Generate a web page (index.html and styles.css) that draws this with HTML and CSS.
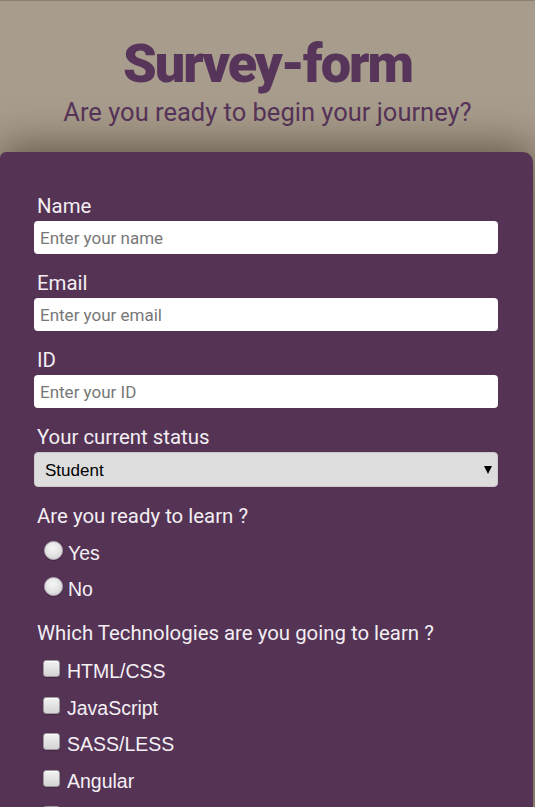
FILE: index.html
```html
<!DOCTYPE html>
<html lang="en">
<head>
<meta charset="utf-8">
<title>Survey-form</title>
<link rel="stylesheet" href="styles.css">
</head>
<body>
<header class="hero">
  <h1 class="title">Survey-form</h1>
  <p class="subtitle">Are you ready to begin your journey?</p>
</header>
<main class="card">
  <form class="form">
    <div class="field">
      <label class="label" for="name">Name</label>
      <input class="text-input" id="name" type="text" placeholder="Enter your name">
    </div>
    <div class="field">
      <label class="label" for="email">Email</label>
      <input class="text-input" id="email" type="email" placeholder="Enter your email">
    </div>
    <div class="field">
      <label class="label" for="id">ID</label>
      <input class="text-input" id="id" type="text" placeholder="Enter your ID">
    </div>
    <div class="field">
      <label class="label" for="status">Your current status</label>
      <div class="select-wrap">
        <select class="select" id="status">
          <option>Student</option>
          <option>Full-time job</option>
          <option>Other</option>
        </select>
      </div>
    </div>
    <div class="field">
      <p class="label">Are you ready to learn ?</p>
      <label class="option"><input class="radio" type="radio" name="ready"><span>Yes</span></label>
      <label class="option"><input class="radio" type="radio" name="ready"><span>No</span></label>
    </div>
    <div class="field">
      <p class="label">Which Technologies are you going to learn ?</p>
      <label class="option check-row"><input class="check" type="checkbox"><span>HTML/CSS</span></label>
      <label class="option check-row"><input class="check" type="checkbox"><span>JavaScript</span></label>
      <label class="option check-row"><input class="check" type="checkbox"><span>SASS/LESS</span></label>
      <label class="option check-row"><input class="check" type="checkbox"><span>Angular</span></label>
      <label class="option check-row"><input class="check" type="checkbox"><span>React</span></label>
      <label class="option check-row"><input class="check" type="checkbox"><span>Vue</span></label>
    </div>
  </form>
</main>
</body>
</html>
```
FILE: styles.css
```css
* { box-sizing: border-box; }
html, body { margin: 0; padding: 0; }
body {
  background: #a89c8c;
  border-top: 1px solid #8a8178;
  font-family: Roboto, "Noto Sans", sans-serif;
  overflow: hidden;
}
.hero {
  text-align: center;
  color: #57345a;
  padding-top: 33px;
  height: 151px;
}
.title {
  margin: 0;
  font-family: Roboto, sans-serif;
  font-weight: 900;
  font-size: 54px;
  line-height: 60px;
  letter-spacing: -2px;
}
.subtitle {
  margin: 3px 0 0;
  font-size: 25.5px;
  line-height: 30px;
  font-weight: 400;
}
.card {
  position: relative;
  background: #553355;
  margin-right: 2px;
  border-radius: 6px 10px 0 0;
  box-shadow: 0 -6px 40px rgba(40, 30, 20, 0.55);
  padding: 43px 35px 40px 34px;
  min-height: 900px;
}
.form { display: flex; flex-direction: column; gap: 18px; }
.field { display: flex; flex-direction: column; }
.label {
  margin: 0 0 3px;
  padding-left: 3px;
  color: #f2eef2;
  font-size: 20.4px;
  line-height: 23px;
}
.text-input {
  height: 33px;
  width: 100%;
  border: none;
  border-radius: 4px;
  background: #fff;
  padding: 0 6px;
  font-family: Roboto, sans-serif;
  font-size: 17px;
  color: #333;
}
.text-input::placeholder { color: #777; }
.select-wrap { position: relative; }
.select {
  appearance: none;
  -webkit-appearance: none;
  width: 100%;
  height: 35px;
  border: 1px solid #cfc8cf;
  border-radius: 4px;
  background: #dddddd;
  padding: 2px 10px 0;
  font-family: "Liberation Sans", Arial, sans-serif;
  font-size: 17px;
  color: #000;
}
.select-wrap::after {
  content: "";
  position: absolute;
  right: 6px;
  top: 14px;
  border-left: 4px solid transparent;
  border-right: 4px solid transparent;
  border-top: 8px solid #000;
}
.option {
  display: flex;
  align-items: center;
  height: 36.5px;
  padding-top: 8px;
  color: #f4f0f4;
  font-family: "Liberation Sans", Arial, sans-serif;
  font-size: 19.5px;
}
.check-row { padding-top: 11px; }
.radio {
  appearance: none;
  -webkit-appearance: none;
  flex-shrink: 0;
  width: 19px;
  height: 19px;
  margin: 0 5px 6px 10px;
  border-radius: 50%;
  border: 1px solid #b9b5b9;
  background: radial-gradient(circle at 45% 35%, #f6f6f6 0%, #e2e2e2 55%, #c9c9c9 100%);
  box-shadow: 0 1px 1px rgba(0,0,0,0.25);
}
.check {
  appearance: none;
  -webkit-appearance: none;
  flex-shrink: 0;
  width: 17px;
  height: 17px;
  margin: 0 7px 6px 9px;
  border-radius: 3px;
  border: 1px solid #9c989c;
  background: linear-gradient(#f2f2f2, #d4d4d4);
  box-shadow: inset 0 1px 0 #fff, 0 1px 1px rgba(0,0,0,0.2);
}
```
